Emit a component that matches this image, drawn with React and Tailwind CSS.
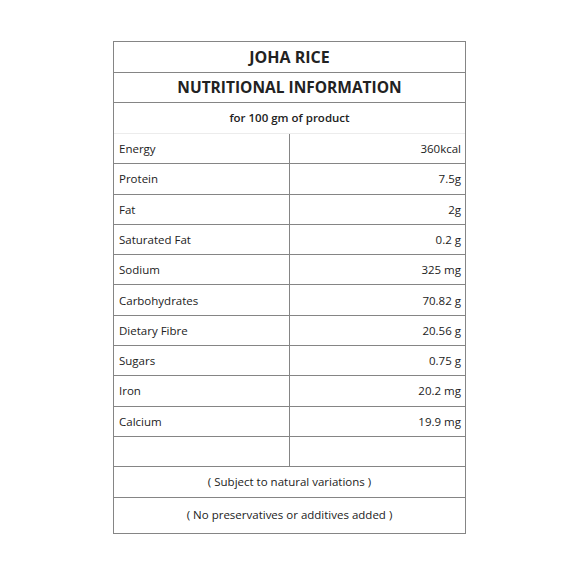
const rows = [
  ['Energy', '360kcal'],
  ['Protein', '7.5g'],
  ['Fat', '2g'],
  ['Saturated Fat', '0.2 g'],
  ['Sodium', '325 mg'],
  ['Carbohydrates', '70.82 g'],
  ['Dietary Fibre', '20.56 g'],
  ['Sugars', '0.75 g'],
  ['Iron', '20.2 mg'],
  ['Calcium', '19.9 mg'],
  ['', ''],
]

export default function App() {
  return (
    <div className="min-h-[570px] w-[570px] bg-white pt-[41px] pl-[113px] text-[#222] font-['Open_Sans','Noto_Sans',sans-serif]">
      <div className="w-[353px] border border-[#858585]">
        <div className="h-[31px] border-b border-[#858585] flex items-center justify-center text-[16px] font-bold">
          JOHA RICE
        </div>
        <div className="h-[30px] border-b border-[#858585] flex items-center justify-center text-[15.5px] font-bold">
          NUTRITIONAL INFORMATION
        </div>
        <div className="h-[31px] border-b border-[#ececec] flex items-center justify-center text-[11.5px] font-semibold">
          for 100 gm of product
        </div>
        {rows.map(([label, value], i) => (
          <div key={i} className="h-[30.3px] border-b border-[#858585] grid grid-cols-[176px_1fr] text-[11.5px]">
            <div className="flex items-center pl-[5px] border-r border-[#858585]">{label}</div>
            <div className="flex items-center justify-end pr-[4px]">{value}</div>
          </div>
        ))}
        <div className="h-[30.3px] border-b border-[#858585] flex items-center justify-center text-[11.5px]">
          ( Subject to natural variations )
        </div>
        <div className="h-[35px] flex items-center justify-center text-[11.5px]">
          ( No preservatives or additives added )
        </div>
      </div>
    </div>
  )
}
